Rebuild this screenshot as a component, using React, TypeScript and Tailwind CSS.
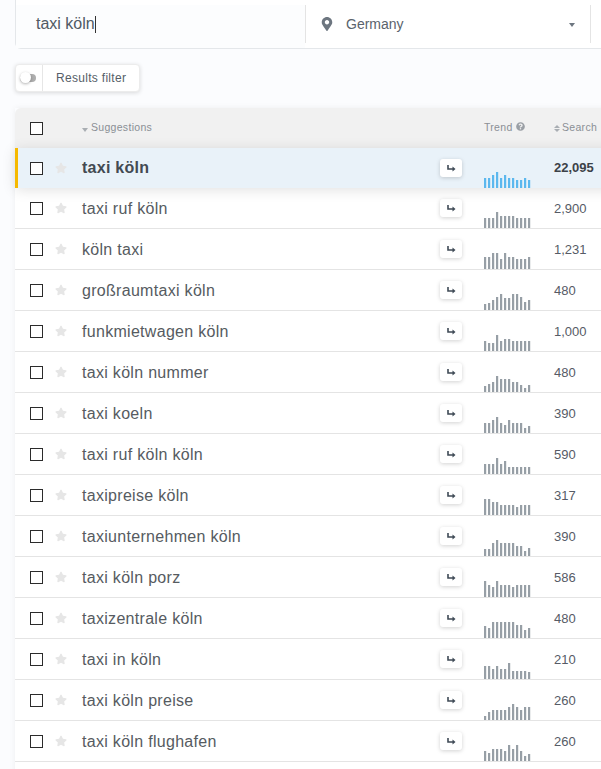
import { FaStar, FaMapMarkerAlt, FaQuestionCircle } from "react-icons/fa";

const ROWS = [
  { name: "taxi köln", volume: "22,095", trend: [10, 10, 13, 16, 10, 13, 10, 10, 8, 8, 10, 8] },
  { name: "taxi ruf köln", volume: "2,900", trend: [10, 10, 10, 16, 12, 12, 12, 12, 10, 10, 10, 10] },
  { name: "köln taxi", volume: "1,231", trend: [12, 12, 16, 16, 10, 16, 12, 12, 10, 10, 10, 12] },
  { name: "großraumtaxi köln", volume: "480", trend: [6, 7, 10, 13, 16, 12, 12, 16, 16, 13, 8, 10] },
  { name: "funkmietwagen köln", volume: "1,000", trend: [10, 8, 8, 16, 10, 12, 12, 10, 10, 10, 10, 10] },
  { name: "taxi köln nummer", volume: "480", trend: [6, 8, 10, 16, 13, 13, 13, 10, 10, 7, 4, 7] },
  { name: "taxi koeln", volume: "390", trend: [10, 10, 13, 16, 10, 8, 13, 10, 10, 10, 5, 7] },
  { name: "taxi ruf köln köln", volume: "590", trend: [10, 10, 10, 16, 10, 13, 7, 7, 7, 7, 7, 7] },
  { name: "taxipreise köln", volume: "317", trend: [16, 16, 13, 13, 10, 10, 10, 10, 8, 10, 10, 10] },
  { name: "taxiunternehmen köln", volume: "390", trend: [7, 7, 13, 16, 13, 13, 13, 13, 10, 10, 5, 8] },
  { name: "taxi köln porz", volume: "586", trend: [16, 12, 10, 16, 12, 12, 12, 10, 12, 12, 12, 12] },
  { name: "taxizentrale köln", volume: "480", trend: [12, 10, 16, 16, 16, 16, 16, 16, 13, 13, 8, 10] },
  { name: "taxi in köln", volume: "210", trend: [13, 13, 10, 13, 10, 10, 16, 8, 8, 8, 8, 7] },
  { name: "taxi köln preise", volume: "260", trend: [4, 8, 10, 10, 10, 10, 13, 16, 13, 10, 13, 13] },
  { name: "taxi köln flughafen", volume: "260", trend: [10, 8, 12, 12, 12, 10, 16, 12, 16, 10, 5, 7] },
];

function Checkbox() {
  return <span className="block w-[13px] h-[13px] border border-[#2b2b2b] shrink-0 bg-white" />;
}

function ArrowIcon() {
  return (
    <svg width="9" height="7" viewBox="0 0 9 7" fill="none">
      <path d="M1 0v4h6" stroke="#3f4a56" strokeWidth="1.6" />
      <path d="M5.5 1.5 8.5 4 5.5 6.5z" fill="#3f4a56" />
    </svg>
  );
}

function Trend({ values, active }: { values: number[]; active: boolean }) {
  return (
    <svg width="48" height="16" viewBox="0 0 48 16" className={active ? "fill-[#5cb8ee]" : "fill-[#979fa6]"}>
      {values.map((h, i) => (
        <rect key={i} x={i * 4} y={16 - h} width="2.2" height={h} />
      ))}
    </svg>
  );
}

function Row({ name, volume, trend, active }: { name: string; volume: string; trend: number[]; active: boolean }) {
  return (
    <div
      className={
        active
          ? "relative z-10 flex items-stretch h-[40px] bg-[#e9f2f9] border-l-[3px] border-[#f6b900] shadow-[0_2px_14px_rgba(0,0,0,0.12)]"
          : "flex items-stretch h-[41px] bg-white border-b border-[#e4e4e4]"
      }
    >
      <div className={active ? "w-[12px]" : "w-[15px]"} />
      <div className="flex items-center w-[25px]">
        <Checkbox />
      </div>
      <div className="flex items-center w-[27px]">
        <FaStar className="text-[#e6e6e6] text-[12px]" />
      </div>
      <div
        className={
          active
            ? "flex items-center w-[358px] font-bold text-[16px] tracking-[0.25px] text-[#434a52]"
            : "flex items-center w-[358px] pt-[2px] text-[16px] tracking-[0.3px] text-[#565b61]"
        }
      >
        {name}
      </div>
      <div className="flex items-center w-[44px]">
        <button className="flex items-center justify-center w-[22px] h-[18px] bg-white rounded-[3px] shadow-[0_1px_4px_rgba(0,0,0,0.18)]">
          <ArrowIcon />
        </button>
      </div>
      <div className="flex items-end w-[70px]">
        <Trend values={trend} active={active} />
      </div>
      <div
        className={
          active
            ? "flex items-center text-[13px] font-bold text-[#3c4248]"
            : "flex items-center pt-[1px] text-[13px] text-[#565b66]"
        }
      >
        {volume}
      </div>
    </div>
  );
}

export default function App() {
  return (
    <div className="w-[601px] h-[769px] overflow-hidden bg-[#fbfcfe] font-['Liberation_Sans',Arial,sans-serif]">
      <div className="flex h-[49px] w-[700px] ml-[15px] border-l border-b border-[#e4e7ea] rounded-bl-[6px] bg-white">
        <div className="flex items-center w-[289px] h-[43px] mt-[5px] pl-[20px] pr-2 pb-[5px] bg-[#fcfdfe] text-[16px] text-[#505a64]">
          taxi köln
          <span className="block w-px h-[17px] bg-[#333]" />
        </div>
        <div className="flex items-center w-[286px] h-[38px] mt-[5px] border-x border-[#e4e4e4]">
          <FaMapMarkerAlt className="ml-[14px] text-[#6d7680] text-[14px]" />
          <span className="ml-[12px] text-[14px] text-[#5a636c]">Germany</span>
          <span className="ml-auto mr-[15px] mt-[1px] w-0 h-0 border-x-[3.5px] border-x-transparent border-t-[4px] border-t-[#6d7680]" />
        </div>
      </div>

      <div className="flex h-[28px] w-[125px] mt-[15px] ml-[15px] bg-white rounded-[4px] border border-[#ececec] shadow-[0_1px_4px_rgba(0,0,0,0.14)]">
        <div className="flex items-center w-[27px] border-r border-[#e6e6e6] pl-[4px]">
          <span className="relative block w-[16px] h-[8px] rounded-full bg-[#aeaeae]">
            <span className="absolute left-0 top-[-2px] w-[11px] h-[11px] rounded-full bg-white shadow-[0_1px_3px_rgba(0,0,0,0.3)]" />
          </span>
        </div>
        <div className="flex items-center pl-[13px] text-[12px] tracking-[0.3px] text-[#565e68]">Results filter</div>
      </div>

      <div className="mt-[16px] ml-[15px] w-[640px] shadow-[0_0_6px_rgba(0,0,0,0.06)]">
        <div className="flex items-center h-[40px] bg-[#f1f1f1] rounded-t-[6px] text-[10.5px] tracking-[0.3px] text-[#8a8f95]">
          <div className="w-[15px]" />
          <div className="w-[52px]">
            <Checkbox />
          </div>
          <div className="flex items-center w-[402px]">
            <span className="mr-[3px] mt-[3px] w-0 h-0 border-x-[3.5px] border-x-transparent border-t-[4px] border-t-[#a9aeb3]" />
            Suggestions
          </div>
          <div className="flex items-center w-[70px]">
            Trend
            <FaQuestionCircle className="ml-[3px] mb-[3px] text-[9px] text-[#9a9fa5]" />
          </div>
          <div className="flex items-center">
            <span className="mr-[2px] flex flex-col gap-px">
              <span className="block w-0 h-0 border-x-[3.5px] border-x-transparent border-b-[3.5px] border-b-[#a9aeb3]" />
              <span className="block w-0 h-0 border-x-[3.5px] border-x-transparent border-t-[3.5px] border-t-[#a9aeb3]" />
            </span>
            Search
          </div>
        </div>
        {ROWS.map((row, i) => (
          <Row key={row.name} {...row} active={i === 0} />
        ))}
        <div className="h-[41px] bg-white" />
      </div>
    </div>
  );
}
